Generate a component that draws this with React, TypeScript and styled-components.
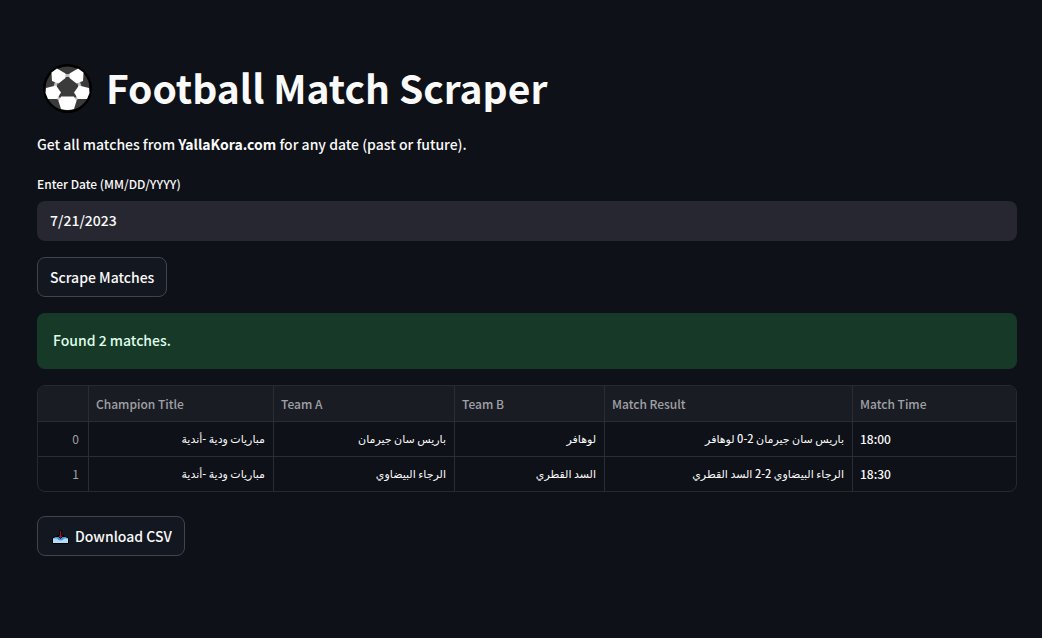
import React, { useState } from "react";
import styled, { createGlobalStyle } from "styled-components";

const GlobalStyle = createGlobalStyle`
  *, *::before, *::after { box-sizing: border-box; }
  body {
    margin: 0;
    background: #0e1117;
    color: #fafafa;
    font-family: "Noto Sans CJK SC", "DejaVu Sans", sans-serif;
    font-size: 14px;
    font-weight: 500;
    line-height: 24px;
  }
`;

const Page = styled.main`
  min-height: 100vh;
  padding: 51px 25px 80px 37px;
  display: flex;
  flex-direction: column;
  align-items: stretch;
  gap: 16px;
`;

const Title = styled.h1`
  display: flex;
  align-items: center;
  gap: 13px;
  margin: 0;
  padding: 10px 0;
  font-size: 39px;
  font-weight: 700;
  line-height: 53px;
`;

const Ball = styled.svg`
  flex: none;
  width: 50px;
  height: 50px;
  margin-left: 6px;
`;

const Intro = styled.p`
  margin: -8px 0 0;
`;

const Field = styled.div`
  display: flex;
  flex-direction: column;
  gap: 5px;
`;

const Label = styled.label`
  font-size: 12px;
`;

const TextInput = styled.input`
  width: 100%;
  height: 40px;
  padding: 0 13px 2px;
  border: 0;
  border-radius: 8px;
  background: #262730;
  color: #fafafa;
  font: inherit;
`;

const Button = styled.button`
  display: flex;
  align-items: center;
  align-self: flex-start;
  gap: 5px;
  height: 40px;
  padding: 0 12px 1px;
  border: 1px solid #41444c;
  border-radius: 8px;
  background: #131720;
  color: #fafafa;
  font: inherit;
  cursor: pointer;
`;

const Alert = styled.div`
  padding: 15px 16px 17px;
  border-radius: 8px;
  background: #173928;
  color: #dffde9;
`;

const TableFrame = styled.div`
  overflow: hidden;
  margin-bottom: 8px;
  border: 1px solid #262930;
  border-radius: 8px;
`;

const Table = styled.table`
  width: 100%;
  table-layout: fixed;
  border-collapse: separate;
  border-spacing: 0;
  font-size: 12px;
  line-height: 20px;

  tr > * + * { border-left: 1px solid #2a2d34; }
  tbody tr > * { border-top: 1px solid #2a2d34; }
`;

const Column = styled.col<{ $width?: number }>`
  width: ${({ $width }) => ($width ? `${$width}px` : "auto")};
`;

const HeadCell = styled.th`
  height: 35px;
  padding: 0 7px;
  background: #1a1c24;
  color: #a0a1a5;
  font-weight: 500;
  text-align: left;
`;

const IndexCell = styled.th`
  height: 35px;
  padding: 0 9px;
  color: #a0a1a5;
  font-weight: 400;
  text-align: right;
`;

const Cell = styled.td`
  height: 35px;
  padding: 0 7px;
  text-align: start;
  white-space: nowrap;

  &[dir="rtl"] { padding-bottom: 3px; font-size: 11px; }
`;

const InboxIcon = styled.svg`
  flex: none;
  width: 18px;
  height: 16px;
  margin-left: 2px;
`;

const columns = [
  { name: "Champion Title", width: 185 },
  { name: "Team A", width: 181 },
  { name: "Team B", width: 150 },
  { name: "Match Result", width: 248 },
  { name: "Match Time" },
];

const matches = [
  ["مباريات ودية -أندية", "باريس سان جيرمان", "لوهافر", "باريس سان جيرمان 2-0 لوهافر", "18:00"],
  ["مباريات ودية -أندية", "الرجاء البيضاوي", "السد القطري", "الرجاء البيضاوي 2-2 السد القطري", "18:30"],
];

export default function App() {
  const [date, setDate] = useState("7/21/2023");

  return (
    <>
      <GlobalStyle />
      <Page>
        <Title>
          <Ball viewBox="0 0 50 50" aria-hidden="true">
            <circle cx="24.500" cy="25.500" r="24.500" fill="#000" />
            <circle cx="24.500" cy="25.500" r="22" fill="#3b3b3b" />
            <path d="M21 12.500H28M14 17 12 24M35 17 37 24M14 34 18 38M35 34 31 38" fill="none" stroke="#bdbdbd" strokeWidth="3" />
            <path d="M24.500 15 33 22 30 32H19L16 22Z" fill="#3b3b3b" />
            <g fill="#fff">
              <path d="M8.500 9.500 14 5.500 22.500 10.500 22.500 15 15.500 20.500 9 18Z" />
              <path d="M40.500 9.500 35 5.500 26.500 10.500 26.500 15 33.500 20.500 40 18Z" />
              <path d="M3 25 13 22.500 18 29.500 14 36 5 36 2.500 30Z" />
              <path d="M46 25 36 22.500 31 29.500 35 36 44 36 46.500 30Z" />
              <path d="M18 33.500H31L33.500 38 31 46Q24.500 48 18 46L15.500 38Z" />
            </g>
          </Ball>
          Football Match Scraper
        </Title>
        <Intro>
          Get all matches from <strong>YallaKora.com</strong> for any date (past or future).
        </Intro>
        <Field>
          <Label htmlFor="match-date">Enter Date (MM/DD/YYYY)</Label>
          <TextInput id="match-date" type="text" value={date} onChange={(e) => setDate(e.target.value)} />
        </Field>
        <Button type="button">Scrape Matches</Button>
        <Alert role="status">Found 2 matches.</Alert>
        <TableFrame>
          <Table>
            <colgroup>
              <Column $width={50} />
              {columns.map((c) => <Column key={c.name} $width={c.width} />)}
            </colgroup>
            <thead>
              <tr>
                <HeadCell aria-label="Index" />
                {columns.map((c) => <HeadCell key={c.name} scope="col">{c.name}</HeadCell>)}
              </tr>
            </thead>
            <tbody>
              {matches.map((row, i) => (
                <tr key={i}>
                  <IndexCell scope="row">{i}</IndexCell>
                  {row.map((value, j) => (
                    <Cell key={j} dir={j < 4 ? "rtl" : "ltr"} lang={j < 4 ? "ar" : undefined}>{value}</Cell>
                  ))}
                </tr>
              ))}
            </tbody>
          </Table>
        </TableFrame>
        <Button type="button">
          <InboxIcon viewBox="0 0 18 16" aria-hidden="true">
            <path d="M3.500 8.500H13.500L16.500 10V15.500H.5V10Z" fill="#3a96dd" stroke="#000" />
            <path d="M1 10.500H5Q6 12.500 8.500 12.500T12 10.500H16V15H1Z" fill="#b4dcf7" />
            <path d="M7.500 2.500H9.500V7.500H11.500L8.500 10.500 5.500 7.500H7.500Z" fill="#a80f22" stroke="#000" strokeWidth=".8" />
          </InboxIcon>
          Download CSV
        </Button>
      </Page>
    </>
  );
}
